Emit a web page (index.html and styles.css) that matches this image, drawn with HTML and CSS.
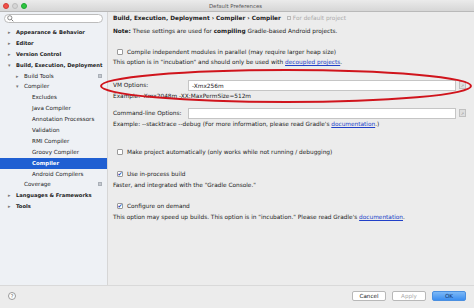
FILE: index.html
```html
<!DOCTYPE html>
<html lang="en">
  <head>
    <meta charset="utf-8" />
    <title>Default Preferences</title>
    <link rel="stylesheet" href="styles.css">
  </head>
  <body>
    <div class="window">
      <div class="titlebar">
        <div class="lights">
          <span class="light red"></span>
          <span class="light off"></span>
          <span class="light green"></span>
        </div>
        <div class="title">Default Preferences</div>
      </div>

      <div class="main">
        <div class="sidebar">
          <div class="search">
            <svg width="7" height="7" viewBox="0 0 10 10"><circle cx="4" cy="4" r="3" fill="none" stroke="#777" stroke-width="1.2"/><path d="M6.2 6.2L9 9" stroke="#777" stroke-width="1.4"/></svg>
          </div>
          <ul class="tree">
            <li class="node l0 bold"><span class="arrow">&#9656;</span>Appearance &amp; Behavior</li>
            <li class="node l0 bold"><span class="arrow">&#9656;</span>Editor</li>
            <li class="node l0 bold"><span class="arrow">&#9656;</span>Version Control</li>
            <li class="node l0 bold"><span class="arrow">&#9662;</span>Build, Execution, Deployment</li>
            <li class="node l1"><span class="arrow">&#9656;</span>Build Tools<span class="proj"></span></li>
            <li class="node l1"><span class="arrow">&#9662;</span>Compiler</li>
            <li class="node l2">Excludes</li>
            <li class="node l2">Java Compiler</li>
            <li class="node l2">Annotation Processors</li>
            <li class="node l2">Validation</li>
            <li class="node l2">RMI Compiler</li>
            <li class="node l2">Groovy Compiler</li>
            <li class="node l2 selected">Compiler</li>
            <li class="node l2">Android Compilers</li>
            <li class="node l1 leaf">Coverage<span class="proj"></span></li>
            <li class="node l0 bold"><span class="arrow">&#9656;</span>Languages &amp; Frameworks</li>
            <li class="node l0 bold"><span class="arrow">&#9656;</span>Tools</li>
          </ul>
        </div>

        <div class="content">
          <div class="crumbs">
            <b>Build, Execution, Deployment &rsaquo; Compiler &rsaquo; Compiler</b>
            <span class="scope"><span class="scope-icon"></span>For default project</span>
          </div>
          <p class="line note"><b>Note:</b> These settings are used for <b>compiling</b> Gradle-based Android projects.</p>

          <label class="check gap-11"><span class="box"></span>Compile independent modules in parallel (may require larger heap size)</label>
          <p class="line">This option is in "incubation" and should only be used with <a href="#">decoupled projects</a>.</p>

          <div class="field gap-12">
            <span class="field-label">VM Options:</span>
            <span class="input">-Xmx256m</span>
            <span class="expand">&#8599;</span>
          </div>
          <p class="line">Example: -Xmx2048m -XX:MaxPermSize=512m</p>

          <div class="field gap-6">
            <span class="field-label">Command-line Options:</span>
            <span class="input"></span>
            <span class="expand">&#8599;</span>
          </div>
          <p class="line">Example: --stacktrace --debug (For more information, please read Gradle's <a href="#">documentation</a>.)</p>

          <label class="check gap-18"><span class="box"></span>Make project automatically (only works while not running / debugging)</label>

          <label class="check gap-12"><span class="box checked">&#10004;</span>Use in-process build</label>
          <p class="line gap-1">Faster, and integrated with the "Gradle Console."</p>

          <label class="check gap-11"><span class="box checked">&#10004;</span>Configure on demand</label>
          <p class="line gap-1">This option may speed up builds. This option is in "incubation." Please read Gradle's <a href="#">documentation</a>.</p>
        </div>
      </div>

      <div class="footer">
        <span class="help">?</span>
        <div class="buttons">
          <button class="btn">Cancel</button>
          <button class="btn disabled">Apply</button>
          <button class="btn default">OK</button>
        </div>
      </div>

      <!-- red annotation drawn over the VM options row -->
      <svg class="annotation" width="474" height="308" viewBox="0 0 474 308">
        <ellipse cx="286" cy="86" rx="185" ry="16" fill="none" stroke="#d0141c" stroke-width="2"/>
      </svg>
    </div>
  </body>
</html>
```

FILE: styles.css
```css
* {
  box-sizing: border-box;
}

html, body {
  margin: 0;
  height: 100%;
  width: 100%;
}

body {
  font-family: "DejaVu Sans", sans-serif;
  font-size: 5.8px;
  color: #222;
  background: #ececec;
}

.window {
  position: relative;
  width: 474px;
  height: 308px;
  display: flex;
  flex-direction: column;
  overflow: hidden;
}

.titlebar {
  height: 12px;
  flex: none;
  display: flex;
  align-items: center;
  position: relative;
  background: linear-gradient(#ebebeb, #d6d6d6);
  border-bottom: 1px solid #b9b9b9;
}

.lights {
  display: flex;
  gap: 3px;
  padding-left: 3px;
}

.light {
  width: 6px;
  height: 6px;
  border-radius: 50%;
}

.red {
  background: #f2514a;
  border: 0.5px solid #d23c35;
}

.off {
  background: #d6d6d6;
  border: 0.5px solid #bdbdbd;
}

.green {
  background: #2dc640;
  border: 0.5px solid #1fa531;
}

.title {
  flex: 1;
  text-align: center;
  color: #555;
  font-size: 5.4px;
  margin-right: 30px;
}

.main {
  flex: 1;
  display: flex;
  min-height: 0;
}

.sidebar {
  width: 108px;
  flex: none;
  background: #eef1f5;
  border-right: 1px solid #d6d6d6;
  padding-top: 2px;
  font-size: 5.6px;
}

.search {
  margin: 0 4px 0 4px;
  height: 9px;
  border: 1px solid #bcbcbc;
  border-radius: 5px;
  background: #fff;
  display: flex;
  align-items: center;
  padding-left: 2px;
}

.tree {
  list-style: none;
  margin: 4px 0 0 0;
  padding: 0;
}

.node {
  height: 10.9px;
  line-height: 10.9px;
  white-space: nowrap;
  position: relative;
  color: #222;
}

.bold {
  font-weight: bold;
  font-size: 5.2px;
}

.arrow {
  display: inline-block;
  width: 8px;
  color: #777;
  font-size: 5px;
  font-weight: normal;
}

.l0 {
  padding-left: 8px;
}

.l1 {
  padding-left: 16px;
}

.l2 {
  padding-left: 32px;
}

.leaf {
  padding-left: 24px;
}

.selected {
  background: #1f5fd2;
  color: #fff;
  font-weight: bold;
  font-size: 5.4px;
}

.proj {
  position: absolute;
  right: 5px;
  top: 3px;
  width: 4px;
  height: 4px;
  background: #c5c9cf;
  border: 0.5px solid #aab0b8;
}

.content {
  flex: 1;
  padding: 1px 8px 0 5px;
  background: #ececec;
}

.crumbs {
  line-height: 10px;
  white-space: nowrap;
}

.scope {
  color: #aaa;
  margin-left: 4px;
}

.scope-icon {
  display: inline-block;
  width: 4px;
  height: 4px;
  border: 0.5px solid #bbb;
  margin-right: 2px;
}

.line {
  margin: 0;
  line-height: 10px;
  white-space: nowrap;
}

.note {
  margin-top: 3px;
}

a {
  color: #2040c8;
  text-decoration: underline;
}

.check {
  display: flex;
  align-items: center;
  height: 10px;
  padding-left: 4px;
  white-space: nowrap;
}

.box {
  width: 6px;
  height: 6px;
  background: #fff;
  border: 0.5px solid #9a9a9a;
  border-radius: 1px;
  margin-right: 4px;
  display: flex;
  align-items: center;
  justify-content: center;
  font-size: 6px;
  color: #1a4fb8;
  line-height: 1;
}

.gap-1 {
  margin-top: 1px;
}

.gap-6 {
  margin-top: 6px;
}

.gap-11 {
  margin-top: 11px;
}

.gap-12 {
  margin-top: 12px;
}

.gap-18 {
  margin-top: 18px;
}

.field {
  display: flex;
  align-items: center;
  height: 12px;
}

.field-label {
  width: 75px;
  flex: none;
}

.input {
  flex: 1;
  height: 11px;
  line-height: 10px;
  background: #fff;
  border: 1px solid #c5c5c5;
  padding-left: 3px;
}

.expand {
  width: 7px;
  height: 8px;
  margin-left: 3px;
  background: #dedede;
  border: 0.5px solid #c0c0c0;
  color: #888;
  font-size: 4px;
  display: flex;
  align-items: center;
  justify-content: center;
}

.footer {
  height: 23px;
  flex: none;
  display: flex;
  align-items: center;
  justify-content: space-between;
  border-top: 1px solid #d9d9d9;
  background: #ececec;
  padding: 0 8px 2px 8px;
}

.help {
  width: 8px;
  height: 8px;
  border-radius: 50%;
  border: 0.5px solid #999;
  background: #fff;
  font-size: 5px;
  color: #555;
  display: flex;
  align-items: center;
  justify-content: center;
}

.buttons {
  display: flex;
  gap: 6px;
}

.btn {
  width: 34px;
  height: 10px;
  padding: 0;
  font-family: "DejaVu Sans", sans-serif;
  font-size: 5.6px;
  background: #fff;
  border: 0.5px solid #b8b8b8;
  border-radius: 2px;
  color: #222;
}

.disabled {
  color: #aaa;
}

.default {
  background: linear-gradient(#7cb8f6, #3c8ef0);
  border-color: #4a8fe0;
  color: #10306a;
}

.annotation {
  position: absolute;
  left: 0;
  top: 0;
  pointer-events: none;
}
```
